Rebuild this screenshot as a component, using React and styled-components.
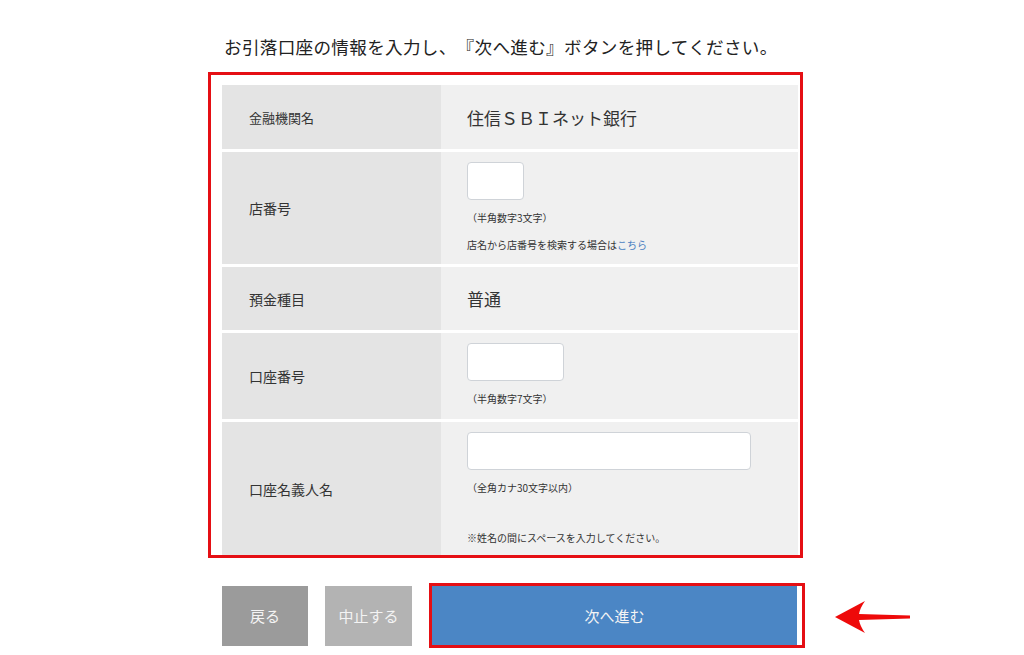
import styled, { createGlobalStyle } from 'styled-components';

const GlobalStyle = createGlobalStyle`
    body {
        margin: 0;
        background: #fff;
        font-family: 'Noto Sans CJK JP', 'Noto Sans', sans-serif;
        color: #333;
        text-spacing-trim: space-all;
    }
`;

const rows = [
    { label: '金融機関名', height: 64, small: true, value: '住信ＳＢＩネット銀行' },
    { label: '店番号', height: 112, input: 57, notes: ['（半角数字3文字）'], link: true },
    { label: '預金種目', height: 63, value: '普通' },
    { label: '口座番号', height: 86, input: 97, notes: ['（半角数字7文字）'] },
    {
        label: '口座名義人名',
        height: 133,
        input: 284,
        notes: ['（全角カナ30文字以内）'],
        remark: '※姓名の間にスペースを入力してください。',
    },
];

export default function App() {
    return (
        <Page>
            <GlobalStyle />
            <Heading>お引落口座の情報を入力し、『次へ進む』ボタンを押してください。</Heading>
            <Highlight>
                <Table>
                    {rows.map((row, index) => (
                        <Row key={index} $height={row.height}>
                            <Label $small={row.small}>{row.label}</Label>
                            <Cell $center={!!row.value}>
                                {row.value && <Value>{row.value}</Value>}
                                {row.input && <Input type="text" $width={row.input} />}
                                {row.notes &&
                                    row.notes.map((note, i) => <Note key={i}>{note}</Note>)}
                                {row.link && (
                                    <Note $gap={13}>
                                        店名から店番号を検索する場合は<Link>こちら</Link>
                                    </Note>
                                )}
                                {row.remark && <Note $gap={36}>{row.remark}</Note>}
                            </Cell>
                        </Row>
                    ))}
                </Table>
            </Highlight>
            <Actions>
                <Button $bg="#9b9b9b" $width={86}>戻る</Button>
                <Button $bg="#b3b3b3" $width={87}>中止する</Button>
                <NextFrame>
                    <Button $bg="#4b86c5" $width={365}>次へ進む</Button>
                </NextFrame>
                <Arrow viewBox="0 0 78 34" width="78" height="34">
                    <path
                        d="M1 17 L31 1 Q26 8 25 14 L76 15.5 L76 18.5 L25 20 Q26 26 31 33 Z"
                        fill="#ee0a0a"
                    />
                </Arrow>
            </Actions>
        </Page>
    );
}

const Page = styled.main`
    padding: 35px 0 0 208px;
    min-height: 100vh;
    box-sizing: border-box;
`;

const Heading = styled.p`
    margin: 0 0 13px 16px;
    font-size: 17.6px;
    line-height: 24px;
    letter-spacing: 0.3px;
    color: #222;
    white-space: nowrap;
`;

const Highlight = styled.section`
    width: 595px;
    height: 486px;
    box-sizing: border-box;
    border: 3px solid #e50f14;
    padding: 10px 0 0 11px;
`;

const Table = styled.div`
    width: 576px;
    display: flex;
    flex-direction: column;
    gap: 3px;
`;

const Row = styled.div`
    display: grid;
    grid-template-columns: 219px 1fr;
    height: ${(props) => props.$height}px;
`;

const Label = styled.div`
    display: flex;
    align-items: center;
    padding-left: 27px;
    background: #e4e4e4;
    font-size: ${(props) => (props.$small ? '13px' : '14px')};
    color: #333;
`;

const Cell = styled.div`
    display: flex;
    flex-direction: column;
    align-items: flex-start;
    justify-content: ${(props) => (props.$center ? 'center' : 'flex-start')};
    padding: ${(props) => (props.$center ? '0' : '10px')} 0 0 26px;
    background: #f0f0f0;
`;

const Value = styled.span`
    font-size: 17px;
    color: #333;
`;

const Input = styled.input`
    width: ${(props) => props.$width}px;
    height: 38px;
    box-sizing: border-box;
    border: 1px solid #cfd3d8;
    border-radius: 4px;
    background: #fff;
    margin: 0;
    outline: none;
`;

const Note = styled.p`
    margin: ${(props) => props.$gap || 11}px 0 0;
    font-size: 10px;
    line-height: 14px;
    color: #333;
    white-space: nowrap;
`;

const Link = styled.span`
    color: #4a7fc1;
`;

const Actions = styled.div`
    display: flex;
    align-items: center;
    gap: 17px;
    margin-top: 25px;
    padding-left: 14px;
`;

const Button = styled.button`
    width: ${(props) => props.$width}px;
    height: 60px;
    border: none;
    border-radius: 0;
    background: ${(props) => props.$bg};
    color: #f4f4f4;
    font-family: inherit;
    font-size: 15px;
    padding: 0;
    cursor: pointer;
`;

const NextFrame = styled.div`
    display: flex;
    padding: 0 5px 0 0;
    border: 3px solid #e50f14;
    background: #fff;

    ${Button} {
        height: 59px;
    }
`;

const Arrow = styled.svg`
    margin-left: 12px;
    margin-top: 3px;
`;
